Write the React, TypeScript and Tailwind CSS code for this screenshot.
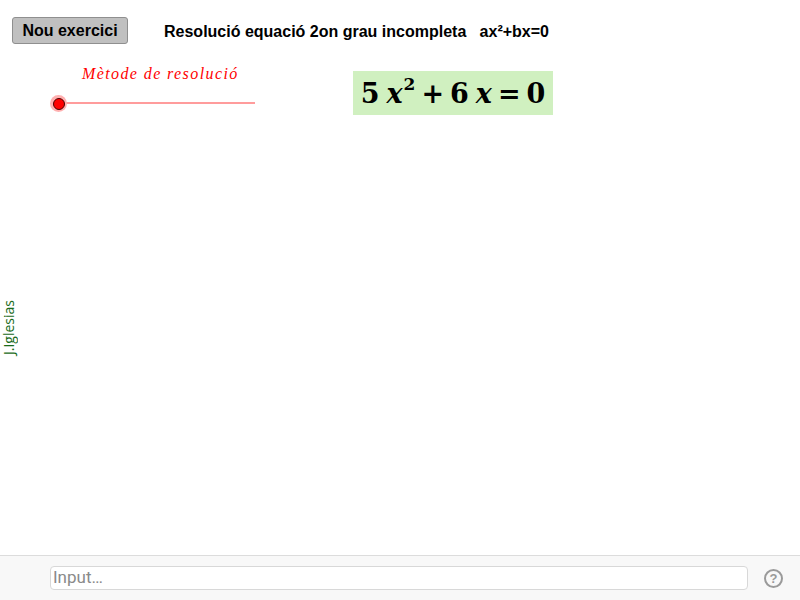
import React from "react";

export default function App() {
  return (
    <div className="w-[800px] h-[600px] flex flex-col bg-white overflow-hidden" style={{ fontFamily: '"Liberation Sans", Arial, sans-serif' }}>
      <div className="relative flex-1">
        <button className="absolute left-[12px] top-[17px] w-[116px] h-[27px] bg-[#c0c0c0] border border-[#8f8f8f] rounded-[3px] text-[16px] font-bold text-black leading-none flex items-center justify-center">
          Nou exercici
        </button>
        <div className="absolute left-[164px] top-[24px] text-[16px] font-bold text-black leading-none whitespace-pre">
          {"Resolució equació 2on grau incompleta   ax²+bx=0"}
        </div>
        <div
          className="absolute left-[82px] top-[66px] text-[16px] italic text-[#ff0000] leading-none tracking-[1.4px]"
          style={{ fontFamily: '"Liberation Serif", "Times New Roman", serif' }}
        >
          Mètode de resolució
        </div>
        <div className="absolute left-[58px] top-[102px] w-[197px] h-[2px] bg-[#ff9c9c]" />
        <div className="absolute left-[50px] top-[95px] w-[17px] h-[17px] rounded-full bg-[#ffb0b0] flex items-center justify-center">
          <div className="w-[12px] h-[12px] rounded-full bg-[#ff0000] border border-[#4a0000]" />
        </div>
        <div
          className="absolute left-[353px] top-[71px] w-[200px] h-[44px] bg-[#d0f0c0] flex items-center justify-center text-[27px] font-bold text-black leading-none"
          style={{ fontFamily: '"DejaVu Serif", "Liberation Serif", serif' }}
        >
          <span>5</span>
          <span className="ml-[7px] italic">x</span>
          <span className="text-[17px] relative top-[-9px] ml-[1px]">2</span>
          <span className="ml-[6px]">+</span>
          <span className="ml-[6px]">6</span>
          <span className="ml-[7px] italic">x</span>
          <span className="ml-[6px]">=</span>
          <span className="ml-[6px]">0</span>
        </div>
        <div
          className="absolute left-[2px] top-[300px] text-[14px] text-[#1a6b1a] leading-none rotate-180"
          style={{ writingMode: "vertical-rl", fontFamily: '"Open Sans", "DejaVu Sans", sans-serif' }}
        >
          J.Iglesias
        </div>
      </div>
      <div className="h-[45px] shrink-0 border-t border-[#dcdcdc] bg-[#f8f8f8] flex items-center pl-[50px] pr-[17px]">
        <div className="w-[698px] h-[24px] bg-white border border-[#d8d8d8] rounded-[4px] flex items-center pl-[2px] text-[17px] text-[#8a8a8a]" style={{ fontFamily: '"Roboto", "Liberation Sans", sans-serif' }}>
          Input…
        </div>
        <div className="ml-auto w-[19px] h-[19px] rounded-full border-2 border-[#9a9a9a] flex items-center justify-center text-[13px] font-bold text-[#9a9a9a] leading-none">
          ?
        </div>
      </div>
    </div>
  );
}
